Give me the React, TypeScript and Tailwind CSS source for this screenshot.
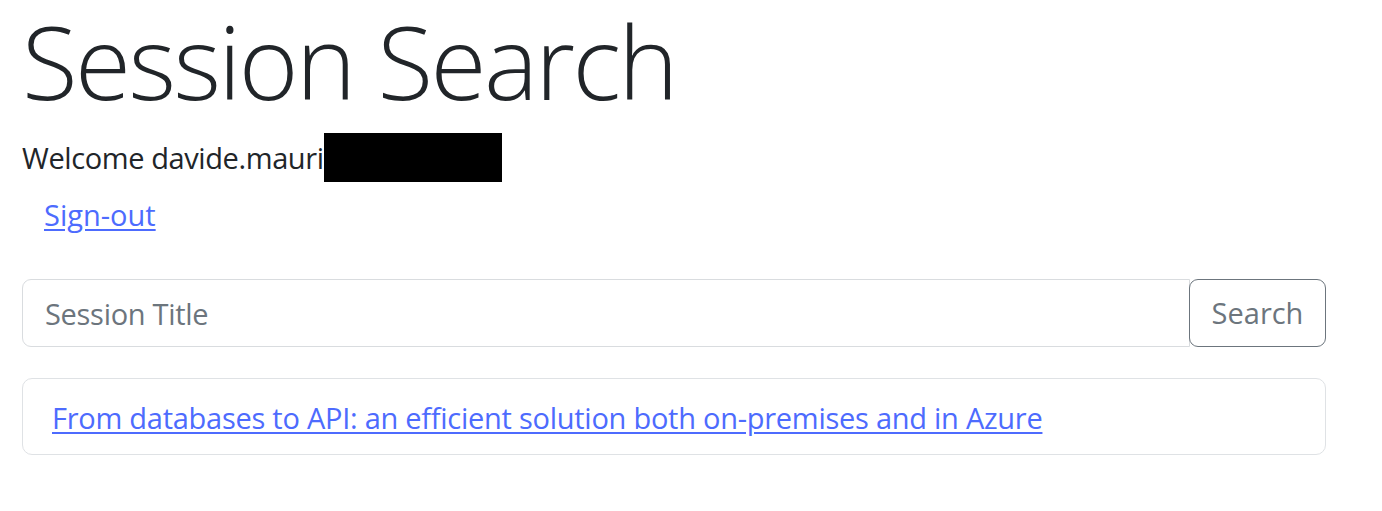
export default function App() {
  return (
    <div className="min-h-screen bg-white text-[#212529] font-['Open_Sans',sans-serif] px-[22px]">
      <h1 className="text-[102px] font-light leading-[122px] tracking-[-2.6px]">Session Search</h1>

      <div className="mt-[11px] flex items-center">
        <span className="text-[29px] leading-[40px] tracking-[-0.4px]">Welcome davide.mauri</span>
        <span className="inline-block h-[49px] w-[178px] bg-black" />
      </div>

      <div className="mt-[13px] pl-[22px] text-[29px] leading-[40px]">
        <a href="#" className="text-[#4d6bfe] underline underline-offset-[3px]">
          Sign-out
        </a>
      </div>

      {/* search box */}
      <div className="mt-[44px] flex w-[1304px]">
        <input
          type="text"
          placeholder="Session Title"
          className="h-[68px] flex-1 rounded-l-[9px] border border-[#d9dcdf] px-[22px] text-[29px] tracking-[-0.3px] outline-none placeholder:text-[#6c757d]"
        />
        <button className="-ml-px h-[68px] w-[137px] rounded-[9px] border border-[#6c757d] text-[29px] text-[#6c757d]">
          Search
        </button>
      </div>

      {/* results */}
      <div className="mt-[31px] flex h-[77px] w-[1304px] items-center rounded-[10px] border border-[#dfe2e5] px-[29px] pt-[2px]">
        <a href="#" className="text-[29px] leading-[40px] tracking-[-0.26px] text-[#4d6bfe] underline underline-offset-[3px]">
          From databases to API: an efficient solution both on-premises and in Azure
        </a>
      </div>
    </div>
  );
}
